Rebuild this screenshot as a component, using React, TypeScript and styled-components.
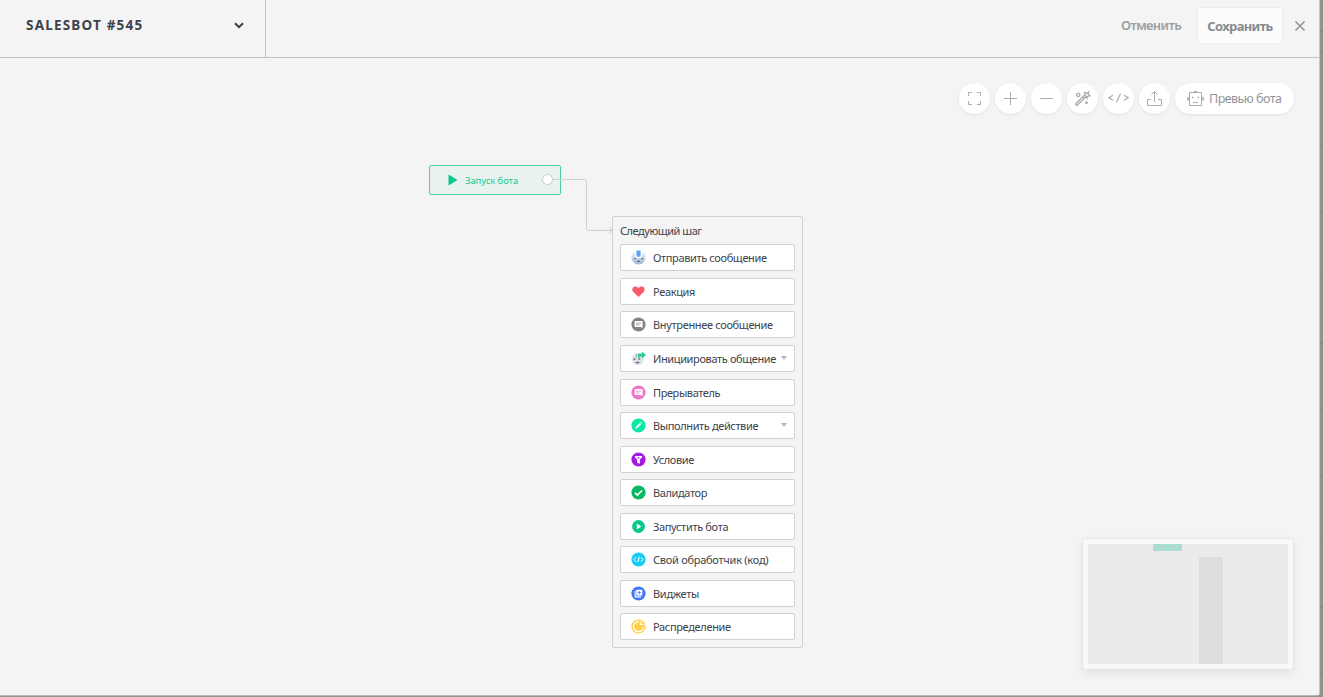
import React from "react";
import styled, { createGlobalStyle, css } from "styled-components";

const Global = createGlobalStyle`
  *{box-sizing:border-box}
  html,body{margin:0;padding:0;overflow:hidden}
  body{font-family:"Noto Sans","Open Sans",sans-serif;color:#363b44;background:#919191}
  button{font-family:inherit;border:0;background:none;padding:0;margin:0}
`;
const Backdrop = styled.div`
  width:1323px;height:697px;overflow:hidden;background-color:#929292;
  background-image:
    linear-gradient(#858585,#858585),
    linear-gradient(#858585,#858585),
    linear-gradient(#929292,#929292),
    repeating-linear-gradient(#858585 0 1px,transparent 1px 66px);
  background-size:100% 1px,100% 1px,100% 140px,100% 100%;
  background-position:0 31px,0 52px,0 0,0 13px;
  background-repeat:no-repeat;
`;
const Modal = styled.div`
  width:1320px;height:696px;background:#f4f4f4;display:flex;flex-direction:column;
  border-right:1px solid #c6c6c6;border-bottom:1px solid #b5b5b5;border-radius:0 0 3px 0;
`;
const Header = styled.header`height:58px;flex:none;display:flex;justify-content:space-between;border-bottom:1px solid #c1c3c2;`;
const TitleBox = styled.div`
  width:266px;height:57px;border-right:1px solid #c1c3c2;padding:0 21px 8px 26px;
  display:flex;align-items:center;justify-content:space-between;
  svg{margin-top:2px}
`;
const Label = styled.span<{ $size: number; $ls?: number; $w?: number; $c?: string }>`
  font-size:${p => p.$size}px;letter-spacing:${p => p.$ls ?? 0}px;font-weight:${p => p.$w ?? 400};
  color:${p => p.$c ?? "#3d424b"};white-space:nowrap;line-height:16px;
`;
const Actions = styled.div`display:flex;align-items:flex-start;padding:7px 13px 0 0;`;
const Cancel = styled.button`height:35px;width:60px;margin-right:16px;display:flex;align-items:center;justify-content:center;`;
const Save = styled.button`
  height:37px;width:86px;margin-right:11px;background:#fcfcfc;border:1px solid #ececec;border-radius:3px;
  display:flex;align-items:center;justify-content:center;
`;
const Close = styled.button`height:38px;display:flex;align-items:center;`;
const Canvas = styled.main`flex:1;position:relative;`;
const Toolbar = styled.div`position:absolute;right:25px;top:25px;display:flex;gap:5px;`;
const pill = css`height:31px;background:#fff;border-radius:16px;box-shadow:0 1px 3px rgba(0,0,0,.08);display:flex;align-items:center;`;
const Round = styled.button`${pill} width:31px;justify-content:center;`;
const Preview = styled.button`${pill} width:119px;padding-left:12px;gap:5px;`;
const StartNode = styled.div`
  position:absolute;left:429px;top:107px;width:132px;height:30px;border:1px solid #4ccfa6;border-radius:2px;
  background:#e8f3ef;display:flex;align-items:center;padding:0 7px 0 18px;
  > svg{margin-top:-1px}
`;
const StartText = styled.div`flex:1;padding:1px 0 0 7px;display:flex;`;
const Port = styled.i`width:11px;height:11px;border-radius:50%;border:1px solid #c8cac9;background:#fff;margin-top:-1px;`;
const Wire = styled.svg`position:absolute;left:552px;top:112px;`;
const Panel = styled.section`
  position:absolute;left:612px;top:158px;width:191px;height:432px;border:1px solid #d0d1d1;border-radius:2px;
  padding:6px 7px 0;display:flex;flex-direction:column;
`;
const List = styled.div`display:flex;flex-direction:column;gap:6.55px;margin-top:5.4px;`;
const Row = styled.div`
  height:27px;background:#fff;border:1px solid #d0d1d1;border-radius:2px;display:flex;align-items:center;
  padding:0 7px 0 10px;svg{flex:none}
`;
const RowText = styled.div`flex:1;padding:1px 0 0 7px;display:flex;min-width:0;`;
const Caret = styled.i`border:3.5px solid transparent;border-top:4px solid #b4b6b8;border-bottom:0;margin-top:-1px;`;
const MiniMap = styled.div`
  position:absolute;left:1082px;top:480px;width:212px;height:132px;background:#f8f8f8;border:1px solid #e6e6e6;
  border-radius:4px;padding:5px;box-shadow:0 3px 8px rgba(0,0,0,.08);
`;
const MiniArea = styled.div`position:relative;width:200px;height:120px;background:#ebebeb;overflow:hidden;`;
const MiniBlock = styled.i<{ $x: number; $y: number; $w: number; $h: number; $c: string }>`
  position:absolute;left:${p => p.$x}px;top:${p => p.$y}px;width:${p => p.$w}px;height:${p => p.$h}px;
  background:${p => p.$c};border-radius:1px;
`;

const Line = ({ children, size = 17 }: { children: React.ReactNode; size?: number }) => (
  <svg width={size} height={size} viewBox={`0 0 ${size} ${size}`} fill="none" stroke="#a9adaf" strokeWidth="1">{children}</svg>
);

type Kind = "send" | "heart" | "note" | "init" | "break" | "edit" | "filter" | "check" | "play" | "code" | "widget" | "share";

const Bubble = ({ color }: { color: string }) => (
  <><circle cx="7.5" cy="7.5" r="7.1" fill={color} />
    <path d="M4.2 4h6.8q.6 0 .6.6v6.6L10 9.900H4.200q-.6 0-.6-.6V4.600q0-.6.6-.6z" fill="#fff" />
    <path d="M5 6.200h5.200M5 8h3.500" stroke={color} strokeWidth=".7" /></>
);
const glyphs: Record<Kind, React.ReactNode> = {
  send: <><defs><linearGradient id="ball" x2="0" y2="1"><stop stopColor="#f1f4f8" /><stop offset="1" stopColor="#9db9d6" /></linearGradient></defs>
    <path d="M4 1.500a7 7 0 1 0 7 0V6q0 2-3.500 2T4 6z" fill="url(#ball)" />
    <rect x="5.4" y=".5" width="4.2" height="6.3" rx="1" fill="#63a4ee" />
    <path d="M3 8.700h1.700M10.300 8.700H12M6 11q1.500.8 3 0" stroke="#51677f" strokeWidth="1.2" fill="none" /></>,
  heart: <path d="M7.5 13 2.6 8.200C.2 5.800 1.500 2.400 4.200 2.400c1.600 0 2.600.7 3.300 1.700.7-1 1.700-1.700 3.300-1.700 2.700 0 4 3.400 1.600 5.800z" fill="#fa5b6b" />,
  note: <Bubble color="#818389" />,
  init: <><circle cx="6.8" cy="8.2" r="6" fill="#dde3e9" /><path d="M2.600 8h1.800M7.600 8h1.600M4.700 11.300q1.800.9 3.500-.2" stroke="#59636d" strokeWidth="1.3" fill="none" /><path d="M5.500 2.500v4" stroke="#a9b3bd" strokeWidth="1.3" />
    <path d="M7 6.500V2.600h4V.5l4 3.500-4 3.500V5.400H9v1.100z" fill="#31cd91" /></>,
  break: <Bubble color="#ed76c5" />,
  edit: <><circle cx="7.5" cy="7.5" r="7.1" fill="#0ce8a5" /><path d="m4.200 10.800.6-1.900 4-4 1.300 1.300-4 4zM9.300 4.400l.7-.6 1.200 1.200-.6.7z" fill="#fff" /></>,
  filter: <><circle cx="7.5" cy="7.5" r="7.1" fill="#a61be3" /><path d="M3.900 3.900h7.200v1.300L8.900 7.600v4.200l-2.800-1.100V7.600L3.900 5.200z" fill="#fff" /><path d="m6 5.400 1.500 1.500L9 5.400z" fill="#a61be3" /></>,
  check: <><circle cx="7.5" cy="7.5" r="7.1" fill="#08b863" /><path d="m4 7.800 2.400 2.200 4.700-4.500" stroke="#fff" strokeWidth="1.7" fill="none" /></>,
  play: <><circle cx="7.5" cy="7.5" r="6.4" fill="#08c78d" /><path d="M5.800 4.600 10.300 7.500l-4.500 2.900z" fill="#fff" /></>,
  code: <><circle cx="7.5" cy="7.5" r="7.1" fill="#18cdf4" /><path d="M5 5.300 2.900 7.500 5 9.700M10 5.300l2.100 2.200L10 9.700M8.300 4.800l-1.600 5.400" stroke="#fff" strokeWidth="1" fill="none" /></>,
  widget: <><circle cx="7.5" cy="7.5" r="7.1" fill="#4076fa" /><rect x="5.3" y="3.7" width="6" height="5.8" rx=".6" fill="#fff" /><path d="M4.200 5v5.900h5.900" stroke="#fff" strokeWidth="1.1" fill="none" /><path d="M8.300 5v3.200M6.700 6.600h3.200" stroke="#4076fa" strokeWidth=".9" /></>,
  share: <><circle cx="7.5" cy="7.5" r="7.1" fill="#ffd04a" /><path d="M8 2.600a5 5 0 1 0 4.500 5.400" stroke="#fff" strokeWidth="1.3" fill="none" /><circle cx="10" cy="5" r="1.2" fill="#fff" /><path d="M10.200 1.600v2M11.500 5.600h2" stroke="#fff" /></>,
};

const steps: { kind: Kind; text: string; ls: number; menu?: boolean }[] = [
  { kind: "send", text: "Отправить сообщение", ls: -0.36 },
  { kind: "heart", text: "Реакция", ls: -0.35 },
  { kind: "note", text: "Внутреннее сообщение", ls: -0.33 },
  { kind: "init", text: "Инициировать общение", ls: -0.37, menu: true },
  { kind: "break", text: "Прерыватель", ls: -0.4 },
  { kind: "edit", text: "Выполнить действие", ls: -0.38, menu: true },
  { kind: "filter", text: "Условие", ls: -0.4 },
  { kind: "check", text: "Валидатор", ls: -0.38 },
  { kind: "play", text: "Запустить бота", ls: -0.34 },
  { kind: "code", text: "Свой обработчик (код)", ls: -0.26 },
  { kind: "widget", text: "Виджеты", ls: -0.3 },
  { kind: "share", text: "Распределение", ls: -0.33 },
];

export default function App() {
  return (
    <><Global />
      <Backdrop><Modal>
        <Header>
          <TitleBox>
            <Label $size={13.5} $w={700} $ls={1.2}>SALESBOT #545</Label>
            <svg width="10" height="7" viewBox="0 0 10 7"><path d="m1 1.200 4 4 4-4" fill="none" stroke="#363b44" strokeWidth="2" /></svg>
          </TitleBox>
          <Actions>
            <Cancel><Label $size={13} $w={600} $ls={-0.63} $c="#999fa2">Отменить</Label></Cancel>
            <Save><Label $size={13} $w={700} $ls={-0.66} $c="#858b8f">Сохранить</Label></Save>
            <Close><svg width="12" height="12" viewBox="0 0 12 12"><path d="m1.500 1.500 9 9m0-9-9 9" stroke="#92989b" strokeWidth="1.7" /></svg></Close>
          </Actions>
        </Header>
        <Canvas>
          <Toolbar>
            <Round><Line><path d="M2.500 6V2.500H6M11 2.500h3.500V6M14.500 11v3.500H11M6 14.500H2.500V11" /></Line></Round>
            <Round><Line><path d="M2 8.500h13M8.500 2v13" /></Line></Round>
            <Round><Line><path d="M2 8.500h13" /></Line></Round>
            <Round><Line><path d="m1.500 14.200 9.200-9.200 1.500 1.500L3 15.700zM9 6.700l1.500 1.500M10.900 5l-.4-2.500 2.100.9 2-1.500-.3 2.500 1.700 1.400-2.300.6-.6 1.800-1-1.700" strokeWidth="1.3" /><circle cx="4.2" cy="4.8" r="1.7" strokeWidth="1.3" /><circle cx="12.5" cy="12.7" r="1" fill="#a9adaf" /></Line></Round>
            <Round><Line size={21}><path d="M5 7.300.8 9.800 5 12.300M16 7.300l4.200 2.500-4.200 2.500M12.500 5.800l-4 8.500" strokeWidth="1.2" /></Line></Round>
            <Round><Line><path d="M5 9.500H1.500v6h14v-6H12M8.500 12V1.500M5.500 4.500l3-3 3 3" /></Line></Round>
            <Preview>
              <Line><path d="M2.500 2.500h12v13h-12zM6 12.500h5" /><path d="M7 1.700h3M5 7.500h1.500M10.500 7.500h1.500M1 7v3.500M16 7v3.500" strokeWidth="1.6" /></Line>
              <Label $size={12.5} $ls={-0.53} $c="#8f9699">Превью бота</Label>
            </Preview>
          </Toolbar>
          <StartNode>
            <svg width="10" height="12" viewBox="0 0 10 12"><path d="M.5.500 9.500 6l-9 5.500z" fill="#08c78d" /></svg>
            <StartText><Label $size={9.5} $ls={-0.1} $c="#18c893">Запуск бота</Label></StartText>
            <Port />
          </StartNode>
          <Wire width="61" height="66" viewBox="0 0 61 66" fill="none" stroke="#cfd0d0"><path d="M1 9.500h31.500q2 0 2 2v47q0 2 2 2h24M57 57.500l3.500 3-3.500 3" /></Wire>
          <Panel>
            <Label $size={11} $ls={-0.46}>Следующий шаг</Label>
            <List>{steps.map(s => (
              <Row key={s.kind}>
                <svg width="15" height="15" viewBox="0 0 15 15">{glyphs[s.kind]}</svg>
                <RowText><Label $size={11} $ls={s.ls}>{s.text}</Label></RowText>
                {s.menu && <Caret />}
              </Row>))}
            </List>
          </Panel>
          <MiniMap><MiniArea>
            <MiniBlock $x={65} $y={0} $w={29} $h={7} $c="#aaddd0" />
            <MiniBlock $x={111} $y={12.6} $w={24} $h={108} $c="#dddddd" />
          </MiniArea></MiniMap>
        </Canvas>
      </Modal></Backdrop>
    </>
  );
}
